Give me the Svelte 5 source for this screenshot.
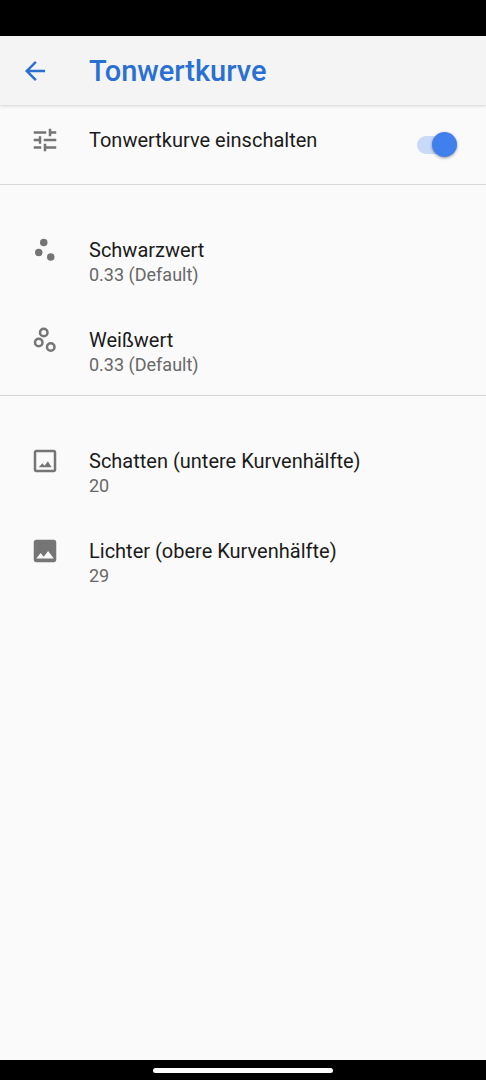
<script>
let enabled = $state(true)

const groups = [
    [
        { icon: 'dots', title: 'Schwarzwert', summary: '0.33 (Default)' },
        { icon: 'rings', title: 'Weißwert', summary: '0.33 (Default)' }
    ],
    [
        { icon: 'imageOutline', title: 'Schatten (untere Kurvenhälfte)', summary: '20' },
        { icon: 'image', title: 'Lichter (obere Kurvenhälfte)', summary: '29' }
    ]
]

const icons = {
    back: 'M20 11H7.83l5.59-5.59L12 4l-8 8 8 8 1.41-1.41L7.83 13H20v-2z',
    tune: 'M3 17v2h6v-2H3zM3 5v2h10V5H3zm10 16v-2h8v-2h-8v-2h-2v6h2zM7 9v2H3v2h4v2h2V9H7zm14 4v-2H11v2h10zm-6-4h2V7h4V5h-4V3h-2v6z',
    imageOutline: 'M19 5v14H5V5h14m0-2H5c-1.1 0-2 .9-2 2v14c0 1.1.9 2 2 2h14c1.1 0 2-.9 2-2V5c0-1.1-.9-2-2-2zM14.3 12.2l-2.7 3.5-1.7-2L7 17h10.3z',
    image: 'M21 19V5c0-1.1-.9-2-2-2H5c-1.1 0-2 .9-2 2v14c0 1.1.9 2 2 2h14c1.1 0 2-.9 2-2zM8.500 13.500l2.500 3.010L14.500 12l4.500 6H5l3.500-4.500z'
}
</script>

{#snippet icon(name)}
    <svg class="icon" viewBox="0 0 24 24" aria-hidden="true">
        {#if name === 'dots'}
            <circle cx="11" cy="6" r="3" />
            <circle cx="7" cy="14" r="3" />
            <circle cx="16.6" cy="17.6" r="3" />
        {:else if name === 'rings'}
            <g class="rings">
                <circle cx="11" cy="6" r="3" />
                <circle cx="7" cy="14" r="3" />
                <circle cx="16.6" cy="17.6" r="3" />
            </g>
        {:else}
            <path d={icons[name]} />
        {/if}
    </svg>
{/snippet}

<div class="screen">
    <div class="status-bar"></div>
    <header>
        <button class="back" aria-label="Zurück">{@render icon('back')}</button>
        <h1>Tonwertkurve</h1>
    </header>

    <main>
        <label class="row toggle">
            {@render icon('tune')}
            <span class="title">Tonwertkurve einschalten</span>
            <input type="checkbox" role="switch" bind:checked={enabled} />
        </label>

        {#each groups as group}
            <section>
                {#each group as item}
                    <button class="row">
                        {@render icon(item.icon)}
                        <span class="text">
                            <span class="title">{item.title}</span>
                            <span class="summary">{item.summary}</span>
                        </span>
                    </button>
                {/each}
            </section>
        {/each}
    </main>

    <div class="nav-bar"><div class="handle"></div></div>
</div>

<style>
:global(body) {
    margin: 0;
    background: #fafafa;
}

.screen {
    display: flex;
    flex-direction: column;
    min-height: 100vh;
    font-family: Roboto, "Liberation Sans", sans-serif;
    color: #1b1b1b;
}

.status-bar {
    height: 36px;
    background: #000;
}

header {
    display: flex;
    align-items: center;
    gap: 39px;
    height: 69px;
    padding: 0 20px;
    background: #f4f4f4;
    box-shadow: 0 1px 3px rgba(0, 0, 0, 0.16);
    color: #2a70d3;
}

h1 {
    margin: 0;
    font-size: 29px;
    font-weight: 500;
    line-height: 36px;
}

button {
    border: 0;
    padding: 0;
    background: none;
    color: inherit;
    font: inherit;
    text-align: left;
    cursor: pointer;
}

.icon {
    display: block;
    flex: none;
    width: 30px;
    height: 30px;
    fill: currentColor;
}

.back {
    height: 30px;
}

main {
    flex: 1;
}

.row {
    display: flex;
    align-items: flex-start;
    gap: 29px;
    box-sizing: border-box;
    width: 100%;
    padding: 20px 29px 20px 30px;
}

.row .icon {
    color: #757575;
}

.rings {
    fill: none;
    stroke: currentColor;
    stroke-width: 2;
}

.text {
    display: flex;
    flex-direction: column;
}

.title {
    font-size: 20px;
    line-height: 30px;
}

.summary {
    font-size: 18px;
    line-height: 20px;
    color: #686868;
}

.toggle {
    height: 79px;
    cursor: pointer;
}

.toggle .title {
    flex: 1;
}

.toggle input {
    appearance: none;
    display: flex;
    align-items: center;
    align-self: center;
    width: 40px;
    height: 18px;
    margin: 0;
    border-radius: 9px;
    background: #c8c8c8;
    cursor: pointer;
}

.toggle input::before {
    content: "";
    width: 25px;
    height: 25px;
    border-radius: 50%;
    background: #fff;
    box-shadow: 0 1px 3px rgba(0, 0, 0, 0.4);
}

.toggle input:checked {
    justify-content: flex-end;
    background: #c8daf8;
}

.toggle input:checked::before {
    background: #4080ec;
}

section {
    padding-top: 30px;
    border-top: 1px solid #d6d6d6;
}

.nav-bar {
    display: flex;
    align-items: center;
    justify-content: center;
    height: 20px;
    background: #000;
}

.handle {
    width: 180px;
    height: 5px;
    border-radius: 3px;
    background: #fff;
}
</style>
